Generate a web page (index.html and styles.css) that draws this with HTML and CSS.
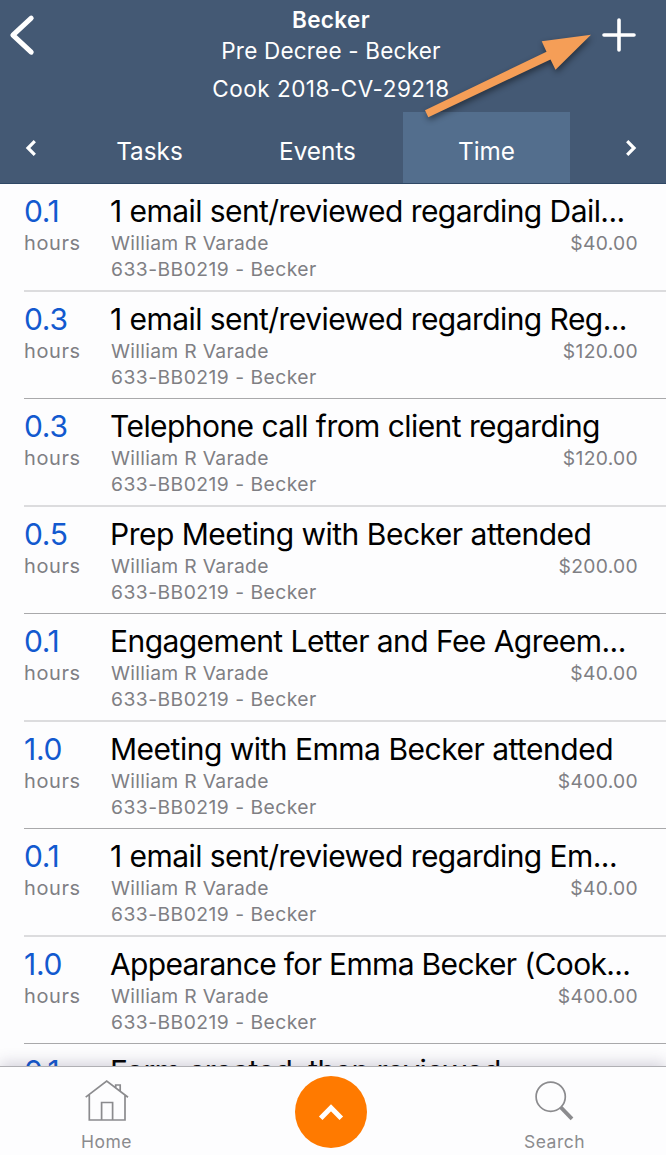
FILE: index.html
```
<!DOCTYPE html>
<html lang="en">
<head>
<meta charset="utf-8">
<title>Becker</title>
<link rel="stylesheet" href="styles.css">
</head>
<body>
<div class="app">
  <header class="header">
    <div class="titlebar">
      <svg class="back" width="80" height="112" viewBox="0 0 80 112"><path d="M31.2 18.2 12.9 35.2 31.2 52.2"/></svg>
      <div class="heading">
        <div class="client">Becker</div>
        <div class="matter">Pre Decree - Becker</div>
        <div class="docket">Cook 2018-CV-29218</div>
      </div>
      <svg class="add" width="80" height="112" viewBox="0 0 80 112"><path d="M33 20v30M18 35h30"/></svg>
    </div>
    <nav class="tabs">
      <svg class="prev" width="67" height="72" viewBox="0 0 67 72"><path d="M34.800 29.200 28 36l6.800 6.800"/></svg>
      <div class="tab">Tasks</div>
      <div class="tab">Events</div>
      <div class="tab active">Time</div>
      <svg class="next" width="96" height="72" viewBox="0 0 96 72"><path d="M57.200 29.200 64 36l-6.800 6.800"/></svg>
    </nav>
    <svg class="pointer" width="190" height="110" viewBox="0 0 190 110"><path d="M171 14.700 121.700 21.300 126.500 31.700 5 90.300 8.300 97.200 130.500 39.500 135.500 49.800Z"/></svg>
  </header>

  <main class="list">
    <div class="entry">
      <div class="time"><div class="qty">0.1</div><div class="unit">hours</div></div>
      <div class="detail"><div class="title snug">1 email sent/reviewed regarding Dail...</div>
        <div class="line"><span>William R Varade</span><span class="amount">$40.00</span></div><div class="ref">633-BB0219 - Becker</div></div>
    </div>
    <div class="entry">
      <div class="time"><div class="qty">0.3</div><div class="unit">hours</div></div>
      <div class="detail"><div class="title snug">1 email sent/reviewed regarding Reg...</div>
        <div class="line"><span>William R Varade</span><span class="amount">$120.00</span></div><div class="ref">633-BB0219 - Becker</div></div>
    </div>
    <div class="entry">
      <div class="time"><div class="qty">0.3</div><div class="unit">hours</div></div>
      <div class="detail"><div class="title snug">Telephone call from client regarding</div>
        <div class="line"><span>William R Varade</span><span class="amount">$120.00</span></div><div class="ref">633-BB0219 - Becker</div></div>
    </div>
    <div class="entry">
      <div class="time"><div class="qty">0.5</div><div class="unit">hours</div></div>
      <div class="detail"><div class="title">Prep Meeting with Becker attended</div>
        <div class="line"><span>William R Varade</span><span class="amount">$200.00</span></div><div class="ref">633-BB0219 - Becker</div></div>
    </div>
    <div class="entry">
      <div class="time"><div class="qty">0.1</div><div class="unit">hours</div></div>
      <div class="detail"><div class="title snug">Engagement Letter and Fee Agreem...</div>
        <div class="line"><span>William R Varade</span><span class="amount">$40.00</span></div><div class="ref">633-BB0219 - Becker</div></div>
    </div>
    <div class="entry">
      <div class="time"><div class="qty">1.0</div><div class="unit">hours</div></div>
      <div class="detail"><div class="title">Meeting with Emma Becker attended</div>
        <div class="line"><span>William R Varade</span><span class="amount">$400.00</span></div><div class="ref">633-BB0219 - Becker</div></div>
    </div>
    <div class="entry">
      <div class="time"><div class="qty">0.1</div><div class="unit">hours</div></div>
      <div class="detail"><div class="title snug">1 email sent/reviewed regarding Em...</div>
        <div class="line"><span>William R Varade</span><span class="amount">$40.00</span></div><div class="ref">633-BB0219 - Becker</div></div>
    </div>
    <div class="entry">
      <div class="time"><div class="qty">1.0</div><div class="unit">hours</div></div>
      <div class="detail"><div class="title tight">Appearance for Emma Becker (Cook...</div>
        <div class="line"><span>William R Varade</span><span class="amount">$400.00</span></div><div class="ref">633-BB0219 - Becker</div></div>
    </div>
    <div class="entry">
      <div class="time"><div class="qty">0.1</div></div>
      <div class="detail"><div class="title snug">Form created, then reviewed</div></div>
    </div>
  </main>

  <footer class="bottom">
    <div class="item home">
      <svg width="50" height="48" viewBox="0 0 50 48"><path d="M3.700 24.200 24.700 8 46 24.200M7.300 21.800V47H43V21.800M19.600 47V29.500h11V47M33.700 14.500V12h4.500v6"/></svg>
      <span>Home</span>
    </div>
    <div class="up"><svg width="72" height="72" viewBox="0 0 72 72"><path d="M25.700 42.200 36 31.800 46.300 42.200"/></svg></div>
    <div class="item search">
      <svg width="50" height="48" viewBox="0 0 50 48"><circle cx="21.700" cy="23.700" r="14.600"/><path class="handle" d="M31.600 34.200 43 45.800"/></svg>
      <span>Search</span>
    </div>
  </footer>
</div>
</body>
</html>
```
FILE: styles.css
```
* { box-sizing: border-box; }
body { margin: 0; font-family: Inter, "Liberation Sans", sans-serif; background: #fdfdfe; }
svg { display: block; fill: none; }
.app { width: 666px; height: 1155px; display: flex; flex-direction: column; overflow: hidden; white-space: nowrap; }

.header { position: relative; height: 184px; flex: none; background: #445974; color: #fff; box-shadow: inset 0 -1px #2f4865; }
.titlebar { height: 112px; display: grid; grid-template-columns: 80px 1fr 80px; }
.heading { padding: 7px 4px 0 0; text-align: center; font-size: 22.500px; line-height: 26px; }
.client { font-weight: 600; letter-spacing: .4px; }
.matter { margin-top: 5px; letter-spacing: .2px; }
.docket { margin-top: 12px; letter-spacing: .5px; }
.back path { stroke: #fff; stroke-width: 5; stroke-linecap: round; stroke-linejoin: round; }
.add path { stroke: #fff; stroke-width: 3.600; stroke-linecap: round; }
.prev path, .next path { stroke: #fff; stroke-width: 3.200; }
.tabs { height: 72px; display: grid; grid-template-columns: 67px 168px 168px 167px 96px; }
.tab { height: 71px; padding: 7px 3px 0 0; line-height: 64px; text-align: center; font-size: 24.300px; }
.tab.active { padding-right: 0; background: #536e8d; }
.pointer { position: absolute; left: 420px; top: 20px; overflow: visible; filter: drop-shadow(1px 3px 3px rgba(0, 0, 0, .45)); }
.pointer path { fill: #f59e57; }

.list { flex: 1; min-height: 0; overflow: hidden; padding-left: 24px; }
.entry { height: 107px; display: flex; padding-top: 10px; border-bottom: 1px solid #a9a9ab; }
.entry:nth-child(odd) { height: 108px; border-bottom: 2px solid #dcdcde; }
.time { width: 86px; flex: none; }
.qty { font-size: 30px; line-height: 34px; letter-spacing: -.3px; color: #1259cf; }
.unit { margin-top: 2px; font-size: 20px; line-height: 26px; letter-spacing: .6px; color: #7f7f84; }
.detail { flex: 1; padding-right: 28px; color: #7f7f84; font-size: 19.300px; line-height: 26px; }
.title { font-size: 30px; line-height: 34px; letter-spacing: -.5px; color: #000; margin-bottom: 2px; }
.title.snug { letter-spacing: -.56px; }
.title.tight { letter-spacing: -.66px; }
.line { display: flex; justify-content: space-between; padding-left: 1px; letter-spacing: .3px; }
.amount { letter-spacing: .3px; }
.ref { padding-left: 1px; letter-spacing: .47px; }

.bottom { position: relative; flex: none; height: 89px; display: grid; grid-template-columns: 213px 236px 217px; justify-items: center; background: #fdfdfe; border-top: 1px solid #b0b0b4; box-shadow: 0 -3px 14px rgba(60, 50, 90, .22); }
.item { display: flex; flex-direction: column; align-items: center; padding-top: 6px; color: #8b8b8e; font-size: 17.500px; line-height: 22px; letter-spacing: .5px; }
.item span { margin-top: 10px; }
.item.search { padding-right: 6px; }
.item path, .item circle { stroke: #8b8b8e; stroke-width: 1.700; }
.item .handle { stroke-width: 3.800; }
.up { width: 72px; height: 72px; margin-top: 9px; border-radius: 50%; background: #ff7a00; }
.up path { stroke: #fff; stroke-width: 5; }
```
